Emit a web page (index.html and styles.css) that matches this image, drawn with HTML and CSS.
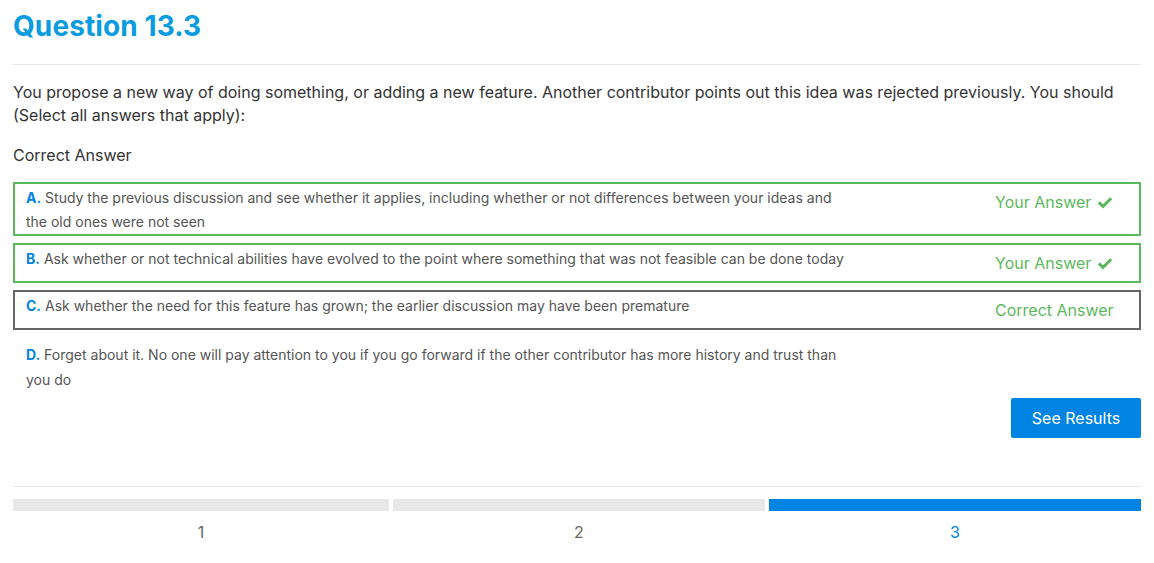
FILE: index.html
```html
<!DOCTYPE html>
<html>
<head>
<meta charset="utf-8">
<link rel="stylesheet" href="styles.css">
</head>
<body>
<div class="page">
  <h1 class="title">Question 13.3</h1>
  <hr class="rule">
  <p class="question">You propose a new way of doing something, or adding a new feature. Another contributor points out this idea was rejected previously. You should (Select all answers that apply):</p>
  <p class="status">Correct Answer</p>
  <div class="options">
    <div class="option chosen">
      <div class="opt-text"><span class="letter">A.</span> Study the previous discussion and see whether it applies, including whether or not differences between your ideas and the old ones were not seen</div>
      <div class="opt-label">Your Answer <svg class="check" viewBox="0 0 16 16" width="16" height="16"><path d="M1.8 8.4 L6 12.4 L14.2 4.2" fill="none" stroke="#5cb85c" stroke-width="3" stroke-linecap="butt" stroke-linejoin="miter"/></svg></div>
    </div>
    <div class="option chosen">
      <div class="opt-text"><span class="letter">B.</span> Ask whether or not technical abilities have evolved to the point where something that was not feasible can be done today</div>
      <div class="opt-label">Your Answer <svg class="check" viewBox="0 0 16 16" width="16" height="16"><path d="M1.8 8.4 L6 12.4 L14.2 4.2" fill="none" stroke="#5cb85c" stroke-width="3" stroke-linecap="butt" stroke-linejoin="miter"/></svg></div>
    </div>
    <div class="option missed">
      <div class="opt-text"><span class="letter">C.</span> Ask whether the need for this feature has grown; the earlier discussion may have been premature</div>
      <div class="opt-label">Correct Answer</div>
    </div>
    <div class="option plain">
      <div class="opt-text tall"><span class="letter">D.</span> Forget about it. No one will pay attention to you if you go forward if the other contributor has more history and trust than you do</div>
      <div class="opt-label"></div>
    </div>
  </div>
  <div class="actions">
    <button class="btn">See Results</button>
  </div>
  <hr class="rule bottom">
  <div class="progress">
    <div class="step"><div class="bar"></div><div class="num">1</div></div>
    <div class="step"><div class="bar"></div><div class="num">2</div></div>
    <div class="step active"><div class="bar"></div><div class="num">3</div></div>
  </div>
</div>
</body>
</html>
```

FILE: styles.css
```css
html, body {
  margin: 0;
  padding: 0;
  background: #fff;
}
body {
  font-family: Inter, "Liberation Sans", sans-serif;
  color: #333;
}
.page {
  padding: 0 13px;
}
.title {
  margin: 0;
  padding-top: 9px;
  font-size: 28px;
  line-height: 34px;
  font-weight: 700;
  color: #0a9be0;
  letter-spacing: 0.1px;
}
.rule {
  border: 0;
  border-top: 1px solid #e6e6e6;
  margin: 21px 0 0;
  height: 0;
}
.question {
  margin: 16px 0 0;
  font-size: 16px;
  line-height: 23px;
}
.status {
  margin: 17px 0 0;
  font-size: 16px;
  line-height: 23px;
}
.options {
  margin-top: 15px;
  display: flex;
  flex-direction: column;
  gap: 7px;
}
.option {
  display: flex;
  border: 2px solid transparent;
}
.option.chosen {
  border-color: #5cb85c;
}
.option.missed {
  border-color: #666;
}
.opt-text {
  width: 820px;
  padding: 2px 0 0 11px;
  font-size: 14px;
  line-height: 24px;
  color: #555;
}
.opt-text.tall {
  padding-top: 3px;
  line-height: 25px;
}
.letter {
  color: #0084e3;
  font-weight: 700;
}
.opt-label {
  margin: 7px 0 7px 149px;
  height: 22px;
  font-size: 16px;
  line-height: 22px;
  color: #5cb85c;
  display: flex;
  align-items: center;
  gap: 6px;
}
.check {
  display: block;
}
.actions {
  display: flex;
  justify-content: flex-end;
  margin-top: 4px;
}
.btn {
  font-family: Inter, "Liberation Sans", sans-serif;
  font-size: 16px;
  background: #0084e3;
  color: #fff;
  border: 0;
  border-radius: 2px;
  width: 130px;
  height: 40px;
  padding: 0;
}
.rule.bottom {
  margin-top: 48px;
}
.progress {
  margin-top: 12px;
  display: grid;
  grid-template-columns: 376px 372px 372px;
  gap: 4px;
}
.bar {
  height: 12px;
  background: #e8e8e8;
}
.step.active .bar {
  background: #0084e3;
}
.num {
  text-align: center;
  margin-top: 10px;
  font-size: 16px;
  line-height: 22px;
  color: #666;
}
.step.active .num {
  color: #0084e3;
}
```
